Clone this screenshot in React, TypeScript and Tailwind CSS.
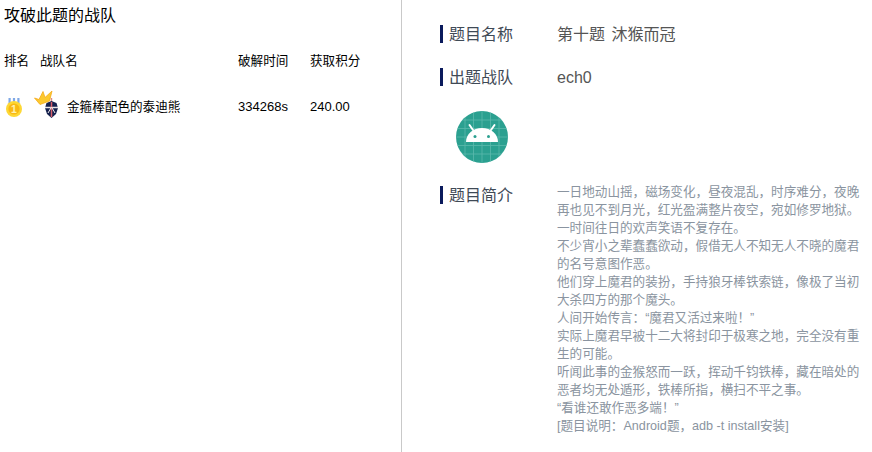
const cjk = "font-['Liberation_Sans','Noto_Sans_CJK_SC',sans-serif]";

function Medal() {
  return (
    <svg width="16" height="19" viewBox="0 0 16 19" className="block">
      <path d="M2.500 0h2.200v7H2.500zM6.900 0h2.200v7H6.900zM11.300 0h2.200v7h-2.200z" fill="#7fa8e6" />
      <circle cx="8" cy="11" r="8" fill="#fdd835" />
      <circle cx="8" cy="11" r="5.600" fill="#f9b913" />
      <text x="8" y="15" textAnchor="middle" fontSize="10.500" fontWeight="700" fill="#fff2b0" fontFamily="Liberation Sans">1</text>
    </svg>
  );
}

function Avatar() {
  return (
    <div className="relative w-[26px] h-[26px]">
      <svg className="absolute left-[11px] top-[4px]" width="13" height="20" viewBox="0 0 13 20">
        <path d="M6.500 0v5" stroke="#d98a8a" strokeWidth="1.400" />
        <path d="M1.500 5 L6.500 3 L11.500 5 L13 10 L11 16 L6.500 20 L2 16 L0 10Z" fill="#14204d" />
        <path d="M0 9.500h13" stroke="#e9e4e6" strokeWidth="1.500" />
        <path d="M6.500 4v15" stroke="#d9606a" strokeWidth="1.500" />
        <path d="M3 15 L6.500 9 L10 15" stroke="#f0e8ea" strokeWidth="1" fill="none" />
      </svg>
      <svg className="absolute left-0 top-[-4px]" width="19" height="15" viewBox="0 0 19 15">
        <path d="M0.500 8 L5 9.500 L9 1.500 L11 7.500 L18 1 L15.500 11 L6 14.500Z" fill="#fcc92f" stroke="#f4a91a" strokeWidth="0.800" strokeLinejoin="round" />
      </svg>
    </div>
  );
}

function Label({ children }: { children: React.ReactNode }) {
  return <div className="w-[117px] shrink-0 border-l-[3px] border-[#0a1a5c] pl-[6px] h-[18px] leading-[20px] text-[16px] text-[#3f4a56]">{children}</div>;
}

const intro = [
  "一日地动山摇，磁场变化，昼夜混乱，时序难分，夜晚再也见不到月光，红光盈满整片夜空，宛如修罗地狱。一时间往日的欢声笑语不复存在。",
  "不少宵小之辈蠢蠢欲动，假借无人不知无人不晓的魔君的名号意图作恶。",
  "他们穿上魔君的装扮，手持狼牙棒铁索链，像极了当初大杀四方的那个魔头。",
  "人间开始传言：“魔君又活过来啦！”",
  "实际上魔君早被十二大将封印于极寒之地，完全没有重生的可能。",
  "听闻此事的金猴怒而一跃，挥动千钧铁棒，藏在暗处的恶者均无处遁形，铁棒所指，横扫不平之事。",
  "“看谁还敢作恶多端！”",
  "[题目说明：Android题，adb -t install安装]",
];

export default function App() {
  return (
    <div className={`flex w-[872px] h-[452px] bg-white overflow-hidden ${cjk}`}>
      <section className="w-[402px] shrink-0 border-r border-[#c9c9c9] pl-[4px] text-black">
        <h2 className="text-[16px] leading-[20px] mt-[6px] font-normal">攻破此题的战队</h2>
        <div className="flex mt-[26px] text-[12.6px] leading-[18px]">
          <span className="w-[36px]">排名</span>
          <span className="w-[198px]">战队名</span>
          <span className="w-[72px]">破解时间</span>
          <span>获取积分</span>
        </div>
        <div className="flex items-center mt-[23px] text-[12.6px] leading-[18px] h-[28px]">
          <span className="w-[30px] pl-[2px]"><Medal /></span>
          <span className="w-[33px]"><Avatar /></span>
          <span className="w-[171px]">金箍棒配色的泰迪熊</span>
          <span className="w-[72px] text-[13px]">334268s</span>
          <span className="text-[13px]">240.00</span>
        </div>
      </section>
      <section className="flex-1 pl-[38px] pr-[11px] pt-[25px]">
        <div className="flex items-start h-[19px]">
          <Label>题目名称</Label>
          <span className="pt-[1px] text-[16px] leading-[18px] text-[#555] [word-spacing:2px]">第十题 沐猴而冠</span>
        </div>
        <div className="flex items-start h-[19px] mt-[24px]">
          <Label>出题战队</Label>
          <span className="pt-[1px] text-[16px] leading-[18px] text-[#555]">ech0</span>
        </div>
        <div className="ml-[15px] mt-[23px] w-[54px] h-[54px]">
          <svg width="54" height="54" viewBox="0 0 54 54" className="block">
            <clipPath id="disc"><circle cx="27" cy="27" r="26" /></clipPath>
            <g clipPath="url(#disc)">
              <rect width="54" height="54" fill="#2ba090" />
              <path d="M0 10h54M0 18.500h54M0 27h54M0 35.500h54M0 44h54M10 0v54M18.500 0v54M27 0v54M35.500 0v54M44 0v54" stroke="#5cb9ac" strokeWidth="0.800" />
            </g>
            <path d="M11 32c0-8 7-14 16-14s16 6 16 14z" fill="#fff" />
            <path d="M18 20l-3.500-5M36 20l3.500-5" stroke="#fff" strokeWidth="2" strokeLinecap="round" />
            <circle cx="20" cy="26.500" r="1.500" fill="#2ba090" />
            <circle cx="33.500" cy="26.500" r="1.500" fill="#2ba090" />
          </svg>
        </div>
        <div className="flex mt-[22px]">
          <Label>题目简介</Label>
          <div className="text-[12.6px] leading-[18px] text-[#8a94a0] -mt-[3px] w-[306px]">
            {intro.map((p) => <p key={p}>{p}</p>)}
          </div>
        </div>
      </section>
    </div>
  );
}
